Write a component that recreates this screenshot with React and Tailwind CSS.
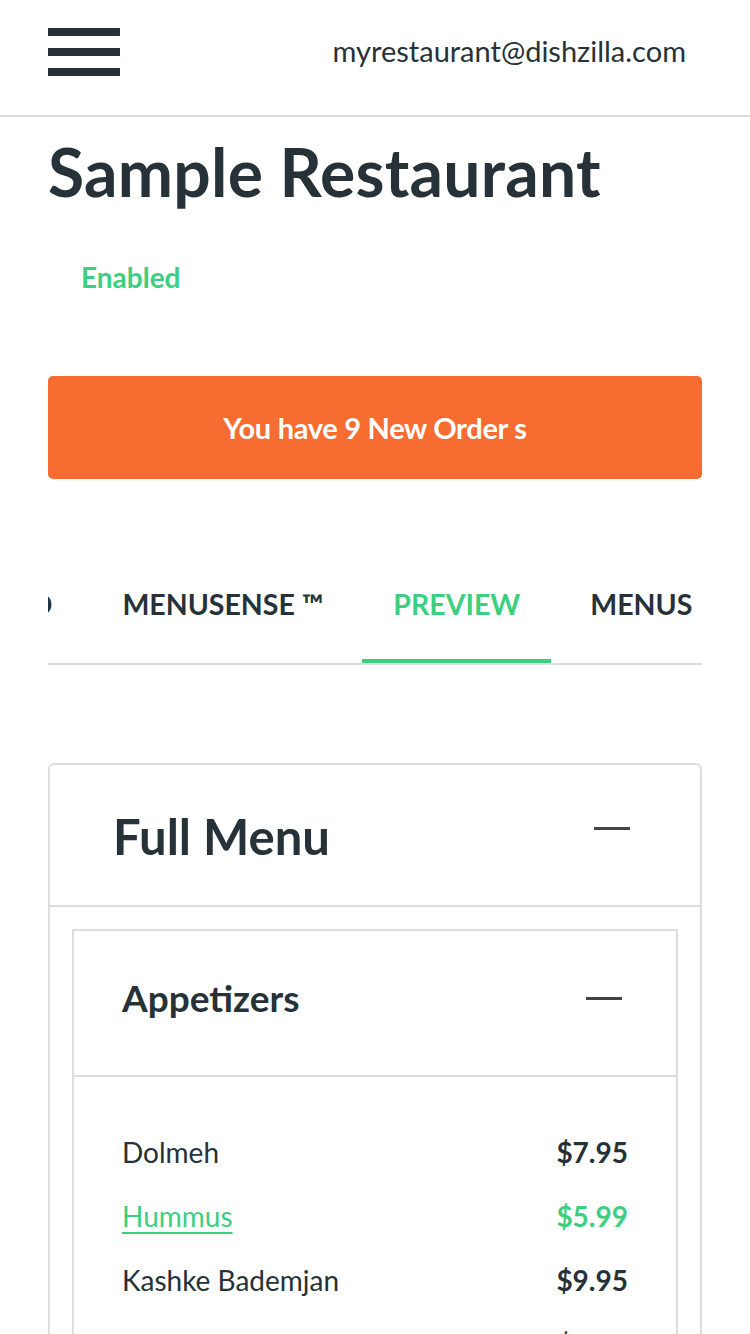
import React, { useEffect, useRef } from 'react'

const tabs = ['Dashboard', 'MenuSense ™', 'Preview', 'Menus', 'Settings']

const items = [
  { name: 'Dolmeh', price: '$7.95' },
  { name: 'Hummus', price: '$5.99', active: true },
  { name: 'Kashke Bademjan', price: '$9.95' },
  { name: 'Shirazi Salad', price: '$6.95' },
  { name: 'Mast O Khiar', price: '$5.95' },
]

const Minus = ({ className = '' }) => (
  <span className={`block w-9 h-[3px] bg-[#444] ${className}`} />
)

export default function App() {
  const scroller = useRef(null)
  const active = useRef(null)

  useEffect(() => {
    if (scroller.current && active.current) {
      scroller.current.scrollLeft = active.current.offsetLeft - 314
    }
  }, [])

  return (
    <div className="min-h-screen bg-white text-[#263238]" style={{ fontFamily: 'Lato, "Open Sans", sans-serif' }}>
      <header className="h-[117px] border-b-2 border-[#dddddd] flex items-start justify-between pl-12 pr-16 pt-7">
        <button className="flex flex-col gap-3">
          <span className="block w-[72px] h-2 bg-[#263238]" />
          <span className="block w-[72px] h-2 bg-[#263238]" />
          <span className="block w-[72px] h-2 bg-[#263238]" />
        </button>
        <div className="text-[29px] leading-none mt-[8px]">myrestaurant@dishzilla.com</div>
      </header>

      <main className="px-12">
        <h1 className="text-[66px] font-bold leading-none mt-[22px] tracking-[0.25px]">Sample Restaurant</h1>
        <div className="text-[28px] font-bold text-[#3ccf7f] mt-[58px] ml-[33px] leading-none">Enabled</div>

        <button className="mt-[85px] w-full h-[103px] rounded-[5px] bg-[#f76d31] text-white text-[29px] font-bold tracking-[-0.3px]">
          You have 9 New Order s
        </button>

        <div className="mt-[73px] border-b-2 border-[#dddddd]">
          <div ref={scroller} className="relative flex gap-2 overflow-x-auto [scrollbar-width:none]">
            {tabs.map((t) => {
              const on = t === 'Preview'
              return (
                <div
                  key={t}
                  ref={on ? active : null}
                  className={`shrink-0 px-[31px] h-[111px] flex items-center pb-[3px] text-[28.5px] font-bold uppercase border-b-4 ${on ? 'text-[#3ccf7f] border-[#3ccf7f]' : 'border-transparent'}`}
                >
                  {t}
                </div>
              )
            })}
          </div>
        </div>

        <section className="mt-[98px] border-2 border-[#dddddd] rounded-[6px]">
          <div className="h-[142px] flex items-center justify-between pl-[63px] pr-[70px] border-b-2 border-[#dddddd]">
            <h2 className="text-[49px] font-bold leading-none mt-[2px]">Full Menu</h2>
            <Minus className="mb-[14px]" />
          </div>
          <div className="px-[22px] pt-[22px]">
            <div className="border-2 border-b-0 border-[#dddddd]">
              <div className="h-[146px] flex items-center justify-between pl-[48px] pr-[54px] pb-[12px] border-b-2 border-[#dddddd]">
                <h3 className="text-[37px] font-bold leading-none">Appetizers</h3>
                <Minus className="mb-[-2px]" />
              </div>
              <ul className="px-[48px] pt-[43px] pb-8 flex flex-col">
                {items.map((it) => (
                  <li key={it.name} className="h-16 flex items-center justify-between text-[28px]">
                    <a className={it.active ? 'text-[#3ccf7f] underline underline-offset-[5px] decoration-2' : ''}>{it.name}</a>
                    <span className={`font-bold ${it.active ? 'text-[#3ccf7f]' : ''}`}>{it.price}</span>
                  </li>
                ))}
              </ul>
            </div>
          </div>
        </section>
      </main>
    </div>
  )
}
